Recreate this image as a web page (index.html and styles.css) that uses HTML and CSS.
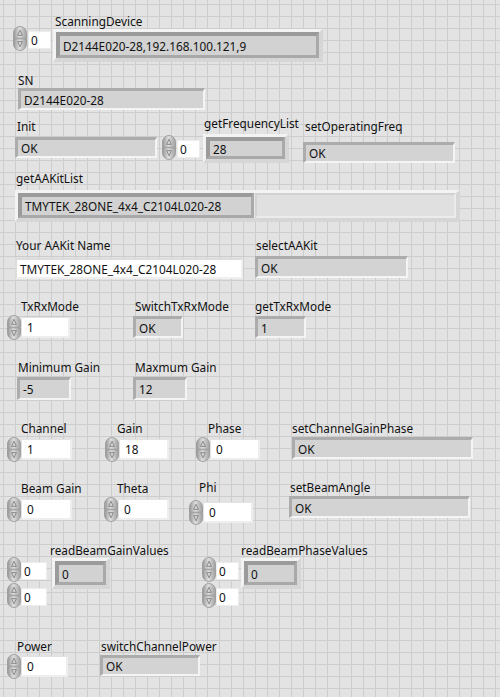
FILE: index.html
```html
<!DOCTYPE html>
<html lang="en">
<head>
<meta charset="utf-8">
<title>TMYTEK Panel</title>
<link rel="stylesheet" href="styles.css">
</head>
<body>
<svg class="defs" width="0" height="0" aria-hidden="true">
  <defs>
    <linearGradient id="sg" x1="0" x2="1" y1="0" y2="0">
      <stop offset="0" stop-color="#959595"/>
      <stop offset="0.45" stop-color="#dedede"/>
      <stop offset="1" stop-color="#a0a0a0"/>
    </linearGradient>
    <symbol id="spin" viewBox="0 0 14 25">
      <path d="M7 0.5C10.8 0.5 13.5 3.6 13.5 7.5V12.2H0.5V7.5C0.5 3.6 3.2 0.5 7 0.5Z" fill="url(#sg)" stroke="#969696" stroke-width="0.8"/>
      <path d="M0.5 12.8H13.5V17.5C13.5 21.4 10.8 24.5 7 24.5C3.2 24.5 0.5 21.4 0.5 17.5Z" fill="url(#sg)" stroke="#969696" stroke-width="0.8"/>
      <path d="M7 4.2L4.6 9.4H9.4Z" fill="#d4d4d4" stroke="#7a7a7a" stroke-width="0.8" stroke-linejoin="round"/>
      <path d="M7 20.8L4.6 15.6H9.4Z" fill="#d4d4d4" stroke="#7a7a7a" stroke-width="0.8" stroke-linejoin="round"/>
    </symbol>
  </defs>
</svg>

<main class="panel">
  <!-- Row A: ScanningDevice -->
  <div class="row row-a">
    <div class="num idx idx-scan"><svg class="spin"><use href="#spin"/></svg><div class="nbox ibox">0</div></div>
    <div class="ctl c-scan">
      <div class="lbl">ScanningDevice</div>
      <div class="arr arr-scan"><div class="ael">D2144E020-28,192.168.100.121,9</div></div>
    </div>
  </div>

  <!-- Row B: SN -->
  <div class="row row-b">
    <div class="ctl c-sn">
      <div class="lbl">SN</div>
      <div class="ind ind-sn">D2144E020-28</div>
    </div>
  </div>

  <!-- Row C -->
  <div class="row row-c">
    <div class="ctl c-init">
      <div class="lbl">Init</div>
      <div class="ind ind-init">OK</div>
    </div>
    <div class="num idx idx-init"><svg class="spin"><use href="#spin"/></svg><div class="nbox ibox">0</div></div>
    <div class="ctl c-freq">
      <div class="lbl">getFrequencyList</div>
      <div class="arr arr-freq"><div class="ael">28</div></div>
    </div>
    <div class="ctl c-opf">
      <div class="lbl">setOperatingFreq</div>
      <div class="ind ind-opf">OK</div>
    </div>
  </div>

  <!-- Row D -->
  <div class="row row-d">
    <div class="ctl c-kit">
      <div class="lbl">getAAKitList</div>
      <div class="arr arr-kit">
        <div class="ael ael-kit">TMYTEK_28ONE_4x4_C2104L020-28</div>
        <div class="ael-off"></div>
      </div>
    </div>
  </div>

  <!-- Row E -->
  <div class="row row-e">
    <div class="ctl c-name">
      <div class="lbl">Your AAKit Name</div>
      <div class="sctl sctl-name">TMYTEK_28ONE_4x4_C2104L020-28</div>
    </div>
    <div class="ctl c-sel">
      <div class="lbl">selectAAKit</div>
      <div class="ind ind-sel">OK</div>
    </div>
  </div>

  <!-- Row F -->
  <div class="row row-f">
    <div class="ctl c-txrx">
      <div class="lbl">TxRxMode</div>
      <div class="num"><svg class="spin"><use href="#spin"/></svg><div class="nbox nb-49">1</div></div>
    </div>
    <div class="ctl c-sw">
      <div class="lbl">SwitchTxRxMode</div>
      <div class="ind ind-sw">OK</div>
    </div>
    <div class="ctl c-gtx">
      <div class="lbl">getTxRxMode</div>
      <div class="ind ind-gtx">1</div>
    </div>
  </div>

  <!-- Row G -->
  <div class="row row-g">
    <div class="ctl c-min">
      <div class="lbl">Minimum Gain</div>
      <div class="ind ind-gain">-5</div>
    </div>
    <div class="ctl c-max">
      <div class="lbl">Maxmum Gain</div>
      <div class="ind ind-gain">12</div>
    </div>
  </div>

  <!-- Row H -->
  <div class="row row-h">
    <div class="ctl c-ch">
      <div class="lbl">Channel</div>
      <div class="num"><svg class="spin"><use href="#spin"/></svg><div class="nbox nb-51">1</div></div>
    </div>
    <div class="ctl c-gain">
      <div class="lbl">Gain</div>
      <div class="num"><svg class="spin"><use href="#spin"/></svg><div class="nbox nb-50">18</div></div>
    </div>
    <div class="ctl c-phase">
      <div class="lbl">Phase</div>
      <div class="num"><svg class="spin"><use href="#spin"/></svg><div class="nbox nb-50">0</div></div>
    </div>
    <div class="ctl c-scgp">
      <div class="lbl">setChannelGainPhase</div>
      <div class="ind ind-wide">OK</div>
    </div>
  </div>

  <!-- Row I -->
  <div class="row row-i">
    <div class="ctl c-bg">
      <div class="lbl">Beam Gain</div>
      <div class="num"><svg class="spin"><use href="#spin"/></svg><div class="nbox nb-51">0</div></div>
    </div>
    <div class="ctl c-theta">
      <div class="lbl">Theta</div>
      <div class="num"><svg class="spin"><use href="#spin"/></svg><div class="nbox nb-51">0</div></div>
    </div>
    <div class="ctl c-phi">
      <div class="lbl">Phi</div>
      <div class="num num-phi"><svg class="spin"><use href="#spin"/></svg><div class="nbox nb-50">0</div></div>
    </div>
    <div class="ctl c-sba">
      <div class="lbl">setBeamAngle</div>
      <div class="ind ind-wide">OK</div>
    </div>
  </div>

  <!-- Row J -->
  <div class="row row-j">
    <div class="grp grp-gain">
      <div class="idxcol">
        <div class="num idx"><svg class="spin"><use href="#spin"/></svg><div class="nbox ibox ibox-w">0</div></div>
        <div class="num idx"><svg class="spin"><use href="#spin"/></svg><div class="nbox ibox ibox-w">0</div></div>
      </div>
      <div class="ctl c-rbg">
        <div class="lbl">readBeamGainValues</div>
        <div class="arr arr-small arr-rbg"><div class="ael">0</div></div>
      </div>
    </div>
    <div class="grp grp-phase">
      <div class="idxcol">
        <div class="num idx"><svg class="spin"><use href="#spin"/></svg><div class="nbox ibox">0</div></div>
        <div class="num idx"><svg class="spin"><use href="#spin"/></svg><div class="nbox ibox">0</div></div>
      </div>
      <div class="ctl c-rbp">
        <div class="lbl">readBeamPhaseValues</div>
        <div class="arr arr-small arr-rbp"><div class="ael">0</div></div>
      </div>
    </div>
  </div>

  <!-- Row K -->
  <div class="row row-k">
    <div class="ctl c-pw">
      <div class="lbl">Power</div>
      <div class="num"><svg class="spin"><use href="#spin"/></svg><div class="nbox nb-47">0</div></div>
    </div>
    <div class="ctl c-scp">
      <div class="lbl">switchChannelPower</div>
      <div class="ind ind-scp">OK</div>
    </div>
  </div>
</main>
</body>
</html>
```

FILE: styles.css
```css
html {
  background-color: #e3e3e3;
  background-image:
    linear-gradient(to right, #cdcdcd 1px, transparent 1px),
    linear-gradient(to bottom, #cdcdcd 1px, transparent 1px);
  background-size: 12px 12px;
  background-position: 3px 4px;
}

body {
  margin: 0;
  font-family: "Noto Sans", "Open Sans", sans-serif;
  font-size: 11.8px;
  color: #111;
}

.defs {
  position: absolute;
  width: 0;
  height: 0;
  overflow: hidden;
}

.panel {
  display: flex;
  flex-direction: column;
  width: 500px;
  height: 697px;
  padding-top: 13px;
  box-sizing: border-box;
  overflow: hidden;
}

.row {
  display: flex;
  align-items: flex-start;
  flex: none;
}

.row-a { height: 59px; }
.row-b { height: 43px; }
.row-c { height: 55px; }
.row-d { height: 67px; }
.row-e { height: 61px; }
.row-f { height: 61px; }
.row-g { height: 61px; }
.row-h { height: 60px; }
.row-i { height: 62px; }
.row-j { height: 96px; }
.row-k { height: 40px; }

.ctl {
  display: flex;
  flex-direction: column;
  align-items: flex-start;
  flex: none;
}

/* labels float over the panel: they do not widen their control */
.lbl {
  width: 0;
  height: 16px;
  line-height: 16px;
  white-space: nowrap;
  overflow: visible;
}

/* ---------- numeric controls ---------- */
.num {
  display: flex;
  align-items: center;
  flex: none;
}

.spin {
  width: 14px;
  height: 25px;
  flex: none;
}

.nbox {
  box-sizing: border-box;
  height: 21px;
  background: #fff;
  border-style: solid;
  border-width: 1px 2px 2px 1px;
  border-color: #e2e2e2 #eeeeee #eeeeee #e2e2e2;
  padding-left: 5px;
  line-height: 18px;
  white-space: nowrap;
  flex: none;
}

.nb-51 { width: 51px; }
.nb-50 { width: 50px; }
.nb-49 { width: 49px; }
.nb-47 { width: 47px; }

.idx .spin { margin-right: 1px; }

.ibox {
  width: 23px;
  height: 18px;
  line-height: 16px;
  padding-left: 2px;
  margin-top: 2px;
  border-width: 1px;
  border-color: #ececec;
}

.ibox-w { width: 26px; }

/* ---------- indicators ---------- */
.ind {
  box-sizing: border-box;
  display: flex;
  align-items: center;
  border-style: solid;
  border-width: 3px 2px 2px 3px;
  border-color: #acacac #f4f4f4 #f4f4f4 #acacac;
  background: #d3d3d3;
  padding-left: 3px;
  white-space: nowrap;
  flex: none;
}

.sctl {
  box-sizing: border-box;
  display: flex;
  align-items: center;
  background: #fff;
  border-style: solid;
  border-width: 2px;
  border-color: #dcdcdc #efefef #efefef #dcdcdc;
  padding-left: 3px;
  white-space: nowrap;
}

/* ---------- arrays ---------- */
.arr {
  box-sizing: border-box;
  display: flex;
  border-style: solid;
  border-width: 3px 4px 4px 3px;
  border-color: #f3f3f3 #d6d6d6 #d6d6d6 #f3f3f3;
  background: #e9e9e9;
  flex: none;
}

.ael {
  box-sizing: border-box;
  flex: 1;
  display: flex;
  align-items: center;
  border-style: solid;
  border-width: 4px 3px 3px 4px;
  border-color: #9b9b9b #a9a9a9 #a9a9a9 #9b9b9b;
  background: #d2d2d2;
  padding-left: 3px;
  white-space: nowrap;
}

.ael-kit { flex: none; width: 236px; }

.ael-off {
  flex: 1;
  box-sizing: border-box;
  border-style: solid;
  border-width: 2px;
  border-color: #d2d2d2 #ececec #ececec #d2d2d2;
  background: #e0e0e0;
  margin-left: 1px;
}

/* ---------- row A ---------- */
.idx-scan { margin-left: 13px; margin-top: 13px; }
.c-scan { margin-left: 2px; }
.c-scan .lbl { padding-left: 2px; }
.arr-scan { width: 270px; height: 33px; }

/* ---------- row B ---------- */
.c-sn { margin-left: 18px; }
.ind-sn { width: 187px; height: 22px; }

/* ---------- row C ---------- */
.c-init { margin-left: 15px; margin-top: 3px; }
.c-init .lbl { padding-left: 2px; }
.ind-init { width: 142px; height: 21px; margin-top: 3px; }
.idx-init { margin-left: 5px; margin-top: 20px; }
.c-freq { margin-left: 3px; }
.c-freq .lbl { padding-left: 1px; }
.arr-freq { width: 86px; height: 29px; margin-top: 3px; }
.c-opf { margin-left: 14px; margin-top: 3px; }
.c-opf .lbl { padding-left: 2px; }
.ind-opf { width: 152px; height: 21px; margin-top: 8px; }

/* ---------- row D ---------- */
.c-kit { margin-left: 15px; }
.c-kit .lbl { padding-left: 1px; }
.arr-kit { width: 445px; height: 32px; margin-top: 4px; }

/* ---------- row E ---------- */
.c-name { margin-left: 15px; }
.c-name .lbl { padding-left: 1px; }
.sctl-name { width: 228px; height: 21px; margin-top: 5px; }
.c-sel { margin-left: 12px; }
.c-sel .lbl { padding-left: 1px; }
.ind-sel { width: 153px; height: 22px; margin-top: 3px; }

/* ---------- row F ---------- */
.c-txrx { margin-left: 7px; }
.c-txrx .lbl { padding-left: 14px; }
.c-txrx .num { margin-top: 1px; }
.c-sw { margin-left: 63px; }
.c-sw .lbl { padding-left: 2px; }
.ind-sw { width: 50px; height: 22px; margin-top: 2px; }
.c-gtx { margin-left: 72px; }
.ind-gtx { width: 51px; height: 22px; margin-top: 2px; }

/* ---------- row G ---------- */
.c-min { margin-left: 17px; }
.c-min .lbl { padding-left: 1px; }
.c-max { margin-left: 62px; }
.c-max .lbl { padding-left: 2px; }
.ind-gain { width: 54px; height: 23px; margin-top: 2px; }

/* ---------- row H ---------- */
.c-ch { margin-left: 7px; }
.c-ch .lbl { padding-left: 14px; }
.c-ch .num { margin-top: 1px; }
.c-gain { margin-left: 33px; }
.c-gain .lbl { padding-left: 12px; }
.c-gain .num { margin-top: 1px; }
.c-phase { margin-left: 27px; }
.c-phase .lbl { padding-left: 12px; }
.c-phase .num { margin-top: 1px; }
.c-scgp { margin-left: 32px; }
.c-scgp .lbl { padding-left: 0; }
.ind-wide { width: 181px; height: 22px; margin-top: 1px; }

/* ---------- row I ---------- */
.c-bg { margin-left: 7px; }
.c-bg .lbl { padding-left: 14px; }
.c-bg .num { margin-top: 1px; }
.c-theta { margin-left: 32px; }
.c-theta .lbl { padding-left: 13px; }
.c-theta .num { margin-top: 1px; }
.c-phi { margin-left: 20px; margin-top: -1px; }
.c-phi .lbl { padding-left: 10px; }
.num-phi { margin-top: 5px; }
.c-sba { margin-left: 36px; margin-top: -1px; }
.c-sba .lbl { padding-left: 1px; }

/* ---------- row J ---------- */
.grp {
  display: flex;
  align-items: flex-start;
  flex: none;
}
.idxcol {
  display: flex;
  flex-direction: column;
  gap: 1px;
  margin-top: 15px;
}
.idxcol .spin { margin-right: 0; }
.grp-gain { margin-left: 7px; }
.c-rbg { margin-left: 3px; }
.arr-small { height: 31px; }
.arr-rbg { width: 58px; margin-left: 2px; }
.grp-phase { margin-left: 92px; }
.c-rbp { margin-left: 2px; }
.arr-rbp { width: 60px; }

/* ---------- row K ---------- */
.c-pw { margin-left: 7px; }
.c-pw .lbl { padding-left: 10px; }
.c-scp { margin-left: 32px; }
.c-scp .lbl { padding-left: 1px; }
.ind-scp { width: 100px; height: 21px; margin-top: 1px; }
```
